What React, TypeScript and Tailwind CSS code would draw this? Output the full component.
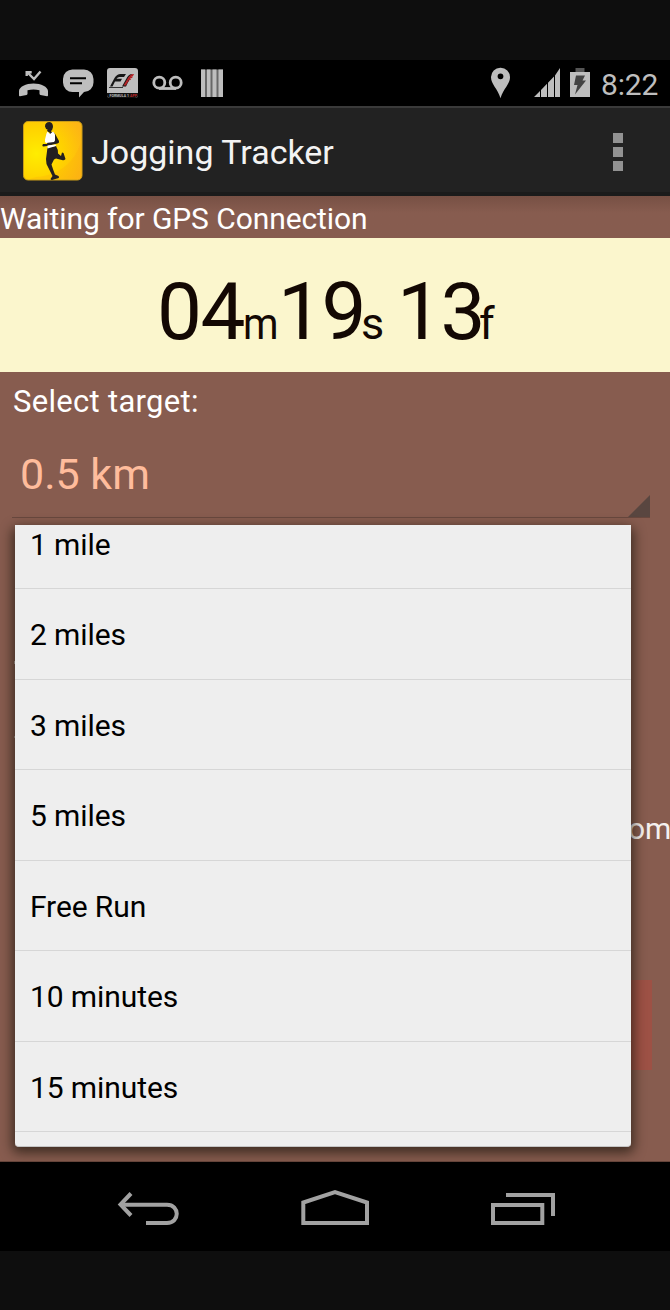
import type { ReactNode } from "react";

const targets = ["2 miles", "3 miles", "5 miles", "Free Run", "10 minutes", "15 minutes"];

function StatusBar() {
  return (
    <div className="flex h-[46px] shrink-0 items-center bg-black text-[#bebebe]">
      <svg className="h-[46px] w-[240px]" viewBox="0 60 240 46" fill="currentColor">
        <path d="M19 95.500v-4.500c0-4 7-7.500 14.500-7.500s14.500 3.500 14.500 7.500v4.500c0 .6-.5.8-1 .7l-6.500-1.200c-.6-.2-1-.6-1-1.200v-3.600c-4-1-8-1-12 0v3.600c0 .6-.4 1-1 1.200l-6.500 1.200c-.5.1-1-.1-1-.7z" />
        <path d="M28 73l6 6 6.500-7.500M26.700 76v-3.700h5" fill="none" stroke="currentColor" strokeWidth="2.400" />
        <path d="M73 69.500h11a9.500 9.500 0 0 1 9.500 9.500v3.500a9.500 9.500 0 0 1-9.500 9.500l-5 5.500v-5.500h-6a9.500 9.500 0 0 1-10-9.500v-3.500a9.500 9.500 0 0 1 10-9.500z" />
        <path d="M70 78.300h16M70 83.300h12" stroke="#000" strokeWidth="2" />
        <rect x="107" y="68" width="31" height="30" rx="3" />
        <path d="M107 93h31v2a3 3 0 0 1-3 3h-25a3 3 0 0 1-3-3z" fill="#111" />
        <path d="M110 86.500l4.500-8.500q2.500-4 6-4h5.500l-2 3h-4.500q-2 0-3 1.800h5.500l-1.500 2.700h-5.500l-2.500 5zM122 86.500l5-9q2-3.500 5-3.500l-6 12.500z" fill="#151515" />
        <path d="M123.500 85.500l5-8.500q2-3 4.500-3h1l-1 2-3 .5h3l-1 1.500h-3.500l3 .7-1.500 1.500h-2.500l1.500 1-1.500 1.300-1.500 3z" fill="#b42226" />
        <path d="M109 87.500h14" stroke="#333" strokeWidth="1" />
        <text x="109.500" y="97" fontSize="3.500" fontWeight="bold" fontFamily="Roboto, sans-serif" textLength="19.500">FORMULA 1</text>
        <text x="130" y="97" fontSize="3.500" fontWeight="bold" fontFamily="Roboto, sans-serif" textLength="7" fill="#c3272b">APP</text>
        <g fill="none" stroke="currentColor" strokeWidth="2.800">
          <circle cx="159.300" cy="82.700" r="5.500" />
          <circle cx="175.700" cy="82.700" r="5.500" />
          <path d="M159 88.500h17" />
        </g>
        <path d="M201 69.500h22v27.500h-22z" fill="#686868" />
        <path d="M201 69.500h4v27.500h-4zM207 69.500h3.500v27.500h-3.500zM212.500 69.500h4v27.500h-4zM218.500 69.500h4.500v27.500h-4.500z" />
      </svg>
      <svg className="ml-auto h-[46px] w-[120px]" viewBox="480 60 120 46" fill="currentColor">
        <path fillRule="evenodd" d="M500.500 67.700a9.300 9.300 0 0 1 9.500 9.500c0 7-6.500 11-9.500 21-3-10-9.500-14-9.500-21a9.300 9.300 0 0 1 9.500-9.500zm0 5.700a2.900 2.900 0 1 0 0 5.800 2.900 2.900 0 0 0 0-5.800z" />
        <path d="M534 97l6-6v6zM541 90l6-6.200v13.200h-6zM548 82.800l6-6.200v20.400h-6zM555 75.500l5-7.500v29h-5z" />
        <path d="M575.500 68h9v4h-9z" fill="#555" />
        <path d="M570 72h20v25h-20z" />
        <path d="M576 75.500h9l-2.500 5h3.500l-11 14 2.500-9.500h-3.500z" fill="#444" />
      </svg>
      <span className="w-[70px] pt-[3px] pl-[1px] text-[30px] leading-[40px] tracking-[-0.2px]">8:22</span>
    </div>
  );
}

function AppIcon() {
  return (
    <svg className="mt-[2px] h-[60px] w-[60px]" viewBox="0 0 60 60">
      <defs>
        <radialGradient id="sun" cx=".22" cy=".55" r=".85">
          <stop offset="0" stopColor="#ffed00" />
          <stop offset=".55" stopColor="#ffd100" />
          <stop offset="1" stopColor="#fdb515" />
        </radialGradient>
      </defs>
      <rect x=".5" y=".5" width="58.500" height="58.500" rx="4.500" fill="url(#sun)" stroke="#c99c18" />
      <path d="M13 56C36 55 54 40 59 17v37q0 4-4 4H7z" fill="#fca90f" opacity=".25" />
      <g fill="#241f20">
        <path d="M22 5.500q0-4.500 4.500-4.500 3.500.5 3.500 5-.5 3-2 4l.5 1q3.500.5 4.500 3.500l3 5.500q.5 2-1.500 2.500l-10.500 2.500-3.500.5q-2-.5-.5-2.500h4l3-11-3-2q.5-.8.500-1.500-2-.5-2.500-3z" />
        <path d="M24.500 26.500l8.500-1.500q2.500 4 2 7.500l3 2.500 1-3.500 1.500.5 2 6q-1.500 2-3.500 1l-6-1.500-2 1-2.500 5q1.500 5 3.500 10l3.500 1.500q1.500 2-1.500 2.500l-5 1.500q-2.500-.5-.5-2.500l1-1.500-6-12-.5-5z" />
      </g>
      <path d="M23.500 12.500l1-2 2.500 2.500 3-2.500q2 2 2 4v5l-1 1.500-8 1q-1.500-1-1-3.500zM24.500 24.500l8-1 .5 1.500-8.500 2.500z" fill="#fff" />
    </svg>
  );
}

function Unit({ children, className }: { children: ReactNode; className: string }) {
  return <span className={`shrink-0 text-[45px] ${className}`}>{children}</span>;
}

function Dropdown() {
  return (
    <div className="absolute top-[153px] left-[15px] h-[622px] w-[616px] overflow-hidden rounded-b-[4px] border-b border-[#c4c4c4] bg-[#eee] text-[30px] text-black">
      <div className="h-[64px] border-b border-[#d6d6d6] pl-[15px] leading-[39px] tracking-[-0.1px]">1 mile</div>
      {targets.map((target) => (
        <div key={target} className="h-[90.57px] border-b border-[#d6d6d6] pl-[15px] leading-[91px] tracking-[-0.1px]">
          {target}
        </div>
      ))}
    </div>
  );
}

export default function App() {
  return (
    <div className="flex h-[1310px] w-[670px] flex-col overflow-hidden bg-[#0e0e0e] pt-[60px] font-['Roboto',sans-serif]">
      <StatusBar />
      <header className="flex h-[90px] shrink-0 items-center border-t-2 border-b-4 border-t-[#3a3a3a] border-b-[#1b1b1b] bg-[#222] pl-[23px] text-[#f3f3f3]">
        <AppIcon />
        <h1 className="pt-[4px] pl-[8px] text-[34px] leading-[44px]">Jogging Tracker</h1>
        <div className="mt-[3px] mr-[47px] ml-auto flex flex-col gap-[4px]">
          <i className="size-[10px] bg-[#929292]" />
          <i className="size-[10px] bg-[#929292]" />
          <i className="size-[10px] bg-[#929292]" />
        </div>
      </header>
      <div className="h-[42px] shrink-0 bg-linear-to-b from-[#775044] to-[#875c4f] to-40% pt-[3px] text-[30px] leading-[40px] tracking-[-0.08px] text-white">
        Waiting for GPS Connection
      </div>
      <div className="flex h-[134px] shrink-0 items-baseline bg-[#fbf6cd] pt-[14px] pl-[157px] text-[80px] leading-[120px] tracking-[-1.500px] text-[#130803]">
        <span className="w-[86px] shrink-0">04</span>
        <Unit className="w-[35px] origin-left scale-x-[0.9]">m</Unit>
        <span className="w-[83px] shrink-0">19</span>
        <Unit className="w-[36px]">s</Unit>
        <span className="w-[82px] shrink-0">13</span>
        <Unit className="w-[20px]">f</Unit>
      </div>
      <main className="relative h-[790px] shrink-0 overflow-hidden border-b border-[#65443a] bg-[#875c4f]">
        <div className="pt-[10px] pl-[13px] text-[31px] leading-[40px] tracking-[0.3px] text-white">Select target:</div>
        <div className="ml-[12px] flex h-[96px] w-[638px] items-end justify-between border-b border-[#69483e]">
          <span className="pb-[16px] pl-[8px] text-[43px] leading-[54px] text-[#ffbc9c]">0.5 km</span>
          <svg className="h-[22px] w-[22px]" viewBox="0 0 22 22" fill="#594640">
            <path d="M0 22L22 0v22z" />
          </svg>
        </div>
        <div className="pt-[291px] pl-[628px] text-[30px] leading-[40px] text-[#f4f0ef]">om</div>
        <div className="mt-[131px] ml-[560px] h-[90px] w-[92px] bg-[#9d5145]" />
        <i className="absolute top-[289px] left-[14px] h-[3px] w-[1px] bg-[#c8b5ae]" />
        <i className="absolute top-[364px] left-[14px] h-[2px] w-[1px] bg-[#b69d94]" />
        <div className="absolute top-[155px] left-[15px] h-[620px] w-[616px] rounded-[4px] shadow-[0_3px_12px_3px_rgba(25,20,10,0.65)]" />
        <Dropdown />
      </main>
      <nav className="h-[89px] shrink-0 bg-black">
        <svg className="h-[89px] w-[670px]" viewBox="0 1162 670 89" fill="none" stroke="#a2a2a2" strokeWidth="4">
          <path d="M122 1204.700h45c13 0 13 18.300 0 18.300h-21" />
          <path d="M131 1193.500l-10.500 11 10.500 11" />
          <path d="M303.300 1223v-20.500l31.700-10.300 32 10.300v20.500z" />
          <path d="M493 1205h49.300v18h-49.300zM506 1195h47v21" />
        </svg>
      </nav>
    </div>
  );
}
